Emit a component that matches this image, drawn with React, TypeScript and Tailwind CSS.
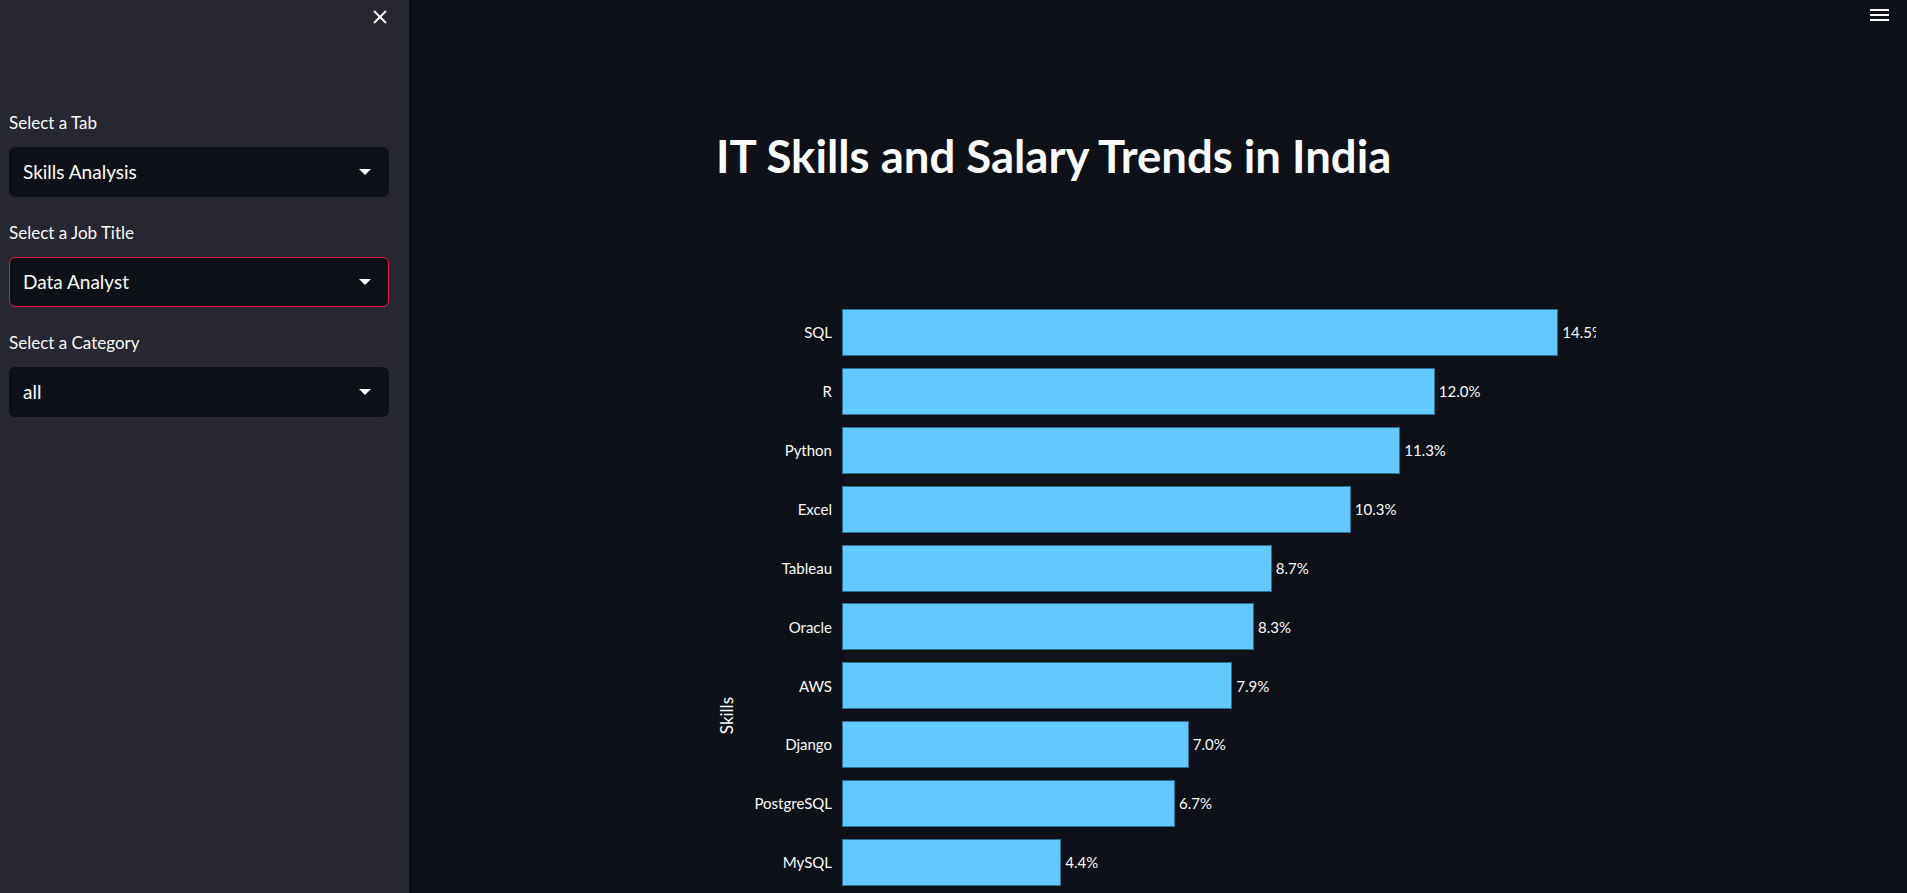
import React from 'react';

const skills = [
  { name: 'SQL', value: 14.5, label: '14.5%' },
  { name: 'R', value: 12.0, label: '12.0%' },
  { name: 'Python', value: 11.3, label: '11.3%' },
  { name: 'Excel', value: 10.3, label: '10.3%' },
  { name: 'Tableau', value: 8.7, label: '8.7%' },
  { name: 'Oracle', value: 8.34, label: '8.3%' },
  { name: 'AWS', value: 7.9, label: '7.9%' },
  { name: 'Django', value: 7.02, label: '7.0%' },
  { name: 'PostgreSQL', value: 6.74, label: '6.7%' },
  { name: 'MySQL', value: 4.44, label: '4.4%' },
];

const PX_PER_PCT = 49.4;

function SelectBox({ label, value, focused = false }: { label: string; value: string; focused?: boolean }) {
  return (
    <div className="flex flex-col">
      <div className="h-[28px] text-[17px] leading-[28px] text-[#fafafa]">{label}</div>
      <div
        className={`mt-[10px] h-[50px] rounded-[6px] bg-[#0e1117] border px-[13px] flex items-center justify-between ${
          focused ? 'border-[#e8193f]' : 'border-[#0e1117]'
        }`}
      >
        <span className="text-[19px] text-[#fafafa]">{value}</span>
        <svg width="12" height="6" viewBox="0 0 12 6" className="mr-[4px]">
          <polygon points="0,0 12,0 6,6" fill="#fafafa" />
        </svg>
      </div>
    </div>
  );
}

export default function App() {
  return (
    <div className="flex h-[893px] w-full overflow-hidden bg-[#0e1117] font-['Lato',sans-serif] text-[#fafafa]">
      <aside className="relative w-[409px] shrink-0 bg-[#262730] px-[9px] pt-[109px]">
        <button className="absolute left-[373px] top-[10px] text-[#fafafa]">
          <svg width="14" height="14" viewBox="0 0 14 14" fill="none" stroke="currentColor" strokeWidth="2">
            <line x1="1" y1="1" x2="13" y2="13" />
            <line x1="13" y1="1" x2="1" y2="13" />
          </svg>
        </button>
        <div className="flex flex-col gap-[22px] pr-[11px]">
          <SelectBox label="Select a Tab" value="Skills Analysis" />
          <SelectBox label="Select a Job Title" value="Data Analyst" focused />
          <SelectBox label="Select a Category" value="all" />
        </div>
      </aside>

      <main className="relative flex-1">
        <button className="absolute right-[18px] top-[9px] flex flex-col gap-[3px]">
          <span className="block h-[2px] w-[19px] bg-[#fafafa]" />
          <span className="block h-[2px] w-[19px] bg-[#fafafa]" />
          <span className="block h-[2px] w-[19px] bg-[#fafafa]" />
        </button>

        <div className="mx-auto w-[900px] pt-[131px]">
          <h1 className="pl-[8px] text-[45.5px] font-bold leading-[50px] text-[#fafafa]">
            IT Skills and Salary Trends in India
          </h1>

          <div className="mt-[128px] flex">
            <div className="w-[40px] shrink-0 pl-[12px] pt-[388px]">
              <span className="block text-[17px] leading-[14px] [writing-mode:vertical-rl] rotate-180">Skills</span>
            </div>
            <div className="flex flex-col gap-[11.9px]">
              {skills.map((s) => (
                <div key={s.name} className="flex h-[47px] items-center">
                  <div className="w-[84px] text-right text-[15px] text-[#fafafa]">{s.name}</div>
                  <div className="ml-[10px] flex h-full w-[754px] items-center overflow-hidden">
                    <div
                      className="h-full shrink-0 border border-[#2c6f96] bg-[#61c9fe]"
                      style={{ width: `${s.value * PX_PER_PCT}px` }}
                    />
                    <span className="ml-[4px] shrink-0 text-[15px] text-[#fafafa]">{s.label}</span>
                  </div>
                </div>
              ))}
            </div>
          </div>
        </div>
      </main>
    </div>
  );
}
